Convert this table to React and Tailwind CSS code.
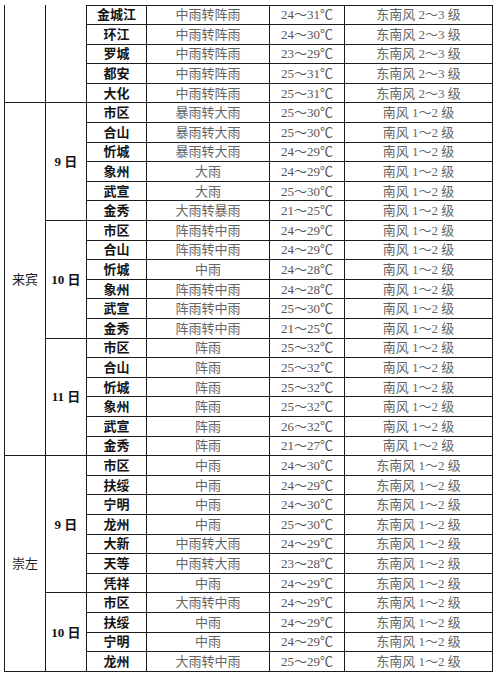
import React from "react";

const serif = { fontFamily: '"Liberation Serif", "Noto Sans CJK SC", serif' };

const sections = [
  {
    region: "",
    days: [
      {
        day: "",
        rows: [
          ["金城江", "中雨转阵雨", "24～31℃", "东南风 2～3 级"],
          ["环江", "中雨转阵雨", "24～30℃", "东南风 2～3 级"],
          ["罗城", "中雨转阵雨", "23～29℃", "东南风 2～3 级"],
          ["都安", "中雨转阵雨", "25～31℃", "东南风 2～3 级"],
          ["大化", "中雨转阵雨", "25～31℃", "东南风 2～3 级"],
        ],
      },
    ],
  },
  {
    region: "来宾",
    days: [
      {
        day: "9 日",
        rows: [
          ["市区", "暴雨转大雨", "25～30℃", "南风 1～2 级"],
          ["合山", "暴雨转大雨", "25～30℃", "南风 1～2 级"],
          ["忻城", "暴雨转大雨", "24～29℃", "南风 1～2 级"],
          ["象州", "大雨", "24～29℃", "南风 1～2 级"],
          ["武宣", "大雨", "25～30℃", "南风 1～2 级"],
          ["金秀", "大雨转暴雨", "21～25℃", "南风 1～2 级"],
        ],
      },
      {
        day: "10 日",
        rows: [
          ["市区", "阵雨转中雨", "24～29℃", "南风 1～2 级"],
          ["合山", "阵雨转中雨", "24～29℃", "南风 1～2 级"],
          ["忻城", "中雨", "24～28℃", "南风 1～2 级"],
          ["象州", "阵雨转中雨", "24～28℃", "南风 1～2 级"],
          ["武宣", "阵雨转中雨", "25～30℃", "南风 1～2 级"],
          ["金秀", "阵雨转中雨", "21～25℃", "南风 1～2 级"],
        ],
      },
      {
        day: "11 日",
        rows: [
          ["市区", "阵雨", "25～32℃", "南风 1～2 级"],
          ["合山", "阵雨", "25～32℃", "南风 1～2 级"],
          ["忻城", "阵雨", "25～32℃", "南风 1～2 级"],
          ["象州", "阵雨", "25～32℃", "南风 1～2 级"],
          ["武宣", "阵雨", "26～32℃", "南风 1～2 级"],
          ["金秀", "阵雨", "21～27℃", "南风 1～2 级"],
        ],
      },
    ],
  },
  {
    region: "崇左",
    days: [
      {
        day: "9 日",
        rows: [
          ["市区", "中雨", "24～30℃", "东南风 1～2 级"],
          ["扶绥", "中雨", "24～29℃", "东南风 1～2 级"],
          ["宁明", "中雨", "24～30℃", "东南风 1～2 级"],
          ["龙州", "中雨", "25～30℃", "东南风 1～2 级"],
          ["大新", "中雨转大雨", "24～29℃", "东南风 1～2 级"],
          ["天等", "中雨转大雨", "23～28℃", "东南风 1～2 级"],
          ["凭祥", "中雨", "24～29℃", "东南风 1～2 级"],
        ],
      },
      {
        day: "10 日",
        rows: [
          ["市区", "大雨转中雨", "24～29℃", "东南风 1～2 级"],
          ["扶绥", "中雨", "24～29℃", "东南风 1～2 级"],
          ["宁明", "中雨", "24～29℃", "东南风 1～2 级"],
          ["龙州", "大雨转中雨", "25～29℃", "东南风 1～2 级"],
        ],
      },
    ],
  },
];

// row-span classes written out so Tailwind picks them up
const spanClass = {
  4: "row-span-4",
  5: "row-span-5",
  6: "row-span-6",
  7: "row-span-7",
  11: "row-span-11",
  18: "row-span-18",
};

const cell = "flex items-center justify-center border-r border-b border-[#1c1c1c]";

export default function App() {
  const cells = [];
  let first = true;

  sections.forEach((sec, si) => {
    const total = sec.days.reduce((n, d) => n + d.rows.length, 0);
    cells.push(
      <div
        key={`r${si}`}
        className={`${cell} border-l ${spanClass[total]} text-[13px] text-[#222]`}
      >
        {sec.region}
      </div>
    );
    sec.days.forEach((d, di) => {
      cells.push(
        <div
          key={`d${si}-${di}`}
          className={`${cell} ${spanClass[d.rows.length]} text-[13px] font-bold text-[#111]`}
        >
          {d.day}
        </div>
      );
      d.rows.forEach((row, ri) => {
        const top = first ? " border-t" : "";
        cells.push(
          <div key={`a${si}-${di}-${ri}`} className={`${cell}${top} text-[13px] font-semibold text-[#141414]`}>
            {row[0]}
          </div>,
          <div key={`b${si}-${di}-${ri}`} className={`${cell}${top} text-[13px] text-[#666]`}>
            {row[1]}
          </div>,
          <div key={`c${si}-${di}-${ri}`} className={`${cell}${top} text-[13px] text-[#555]`}>
            {row[2]}
          </div>,
          <div key={`e${si}-${di}-${ri}`} className={`${cell}${top} text-[13px] text-[#666] whitespace-pre`}>
            {row[3]}
          </div>
        );
        first = false;
      });
    });
  });

  return (
    <div className="w-[500px] h-[678px] overflow-hidden bg-white pt-[4.5px] pl-[4px]" style={serif}>
      <div className="grid grid-cols-[42px_41px_60px_123px_75px_148px] grid-rows-[20.6px_repeat(33,19.6px)] leading-none">
        {cells}
      </div>
    </div>
  );
}
